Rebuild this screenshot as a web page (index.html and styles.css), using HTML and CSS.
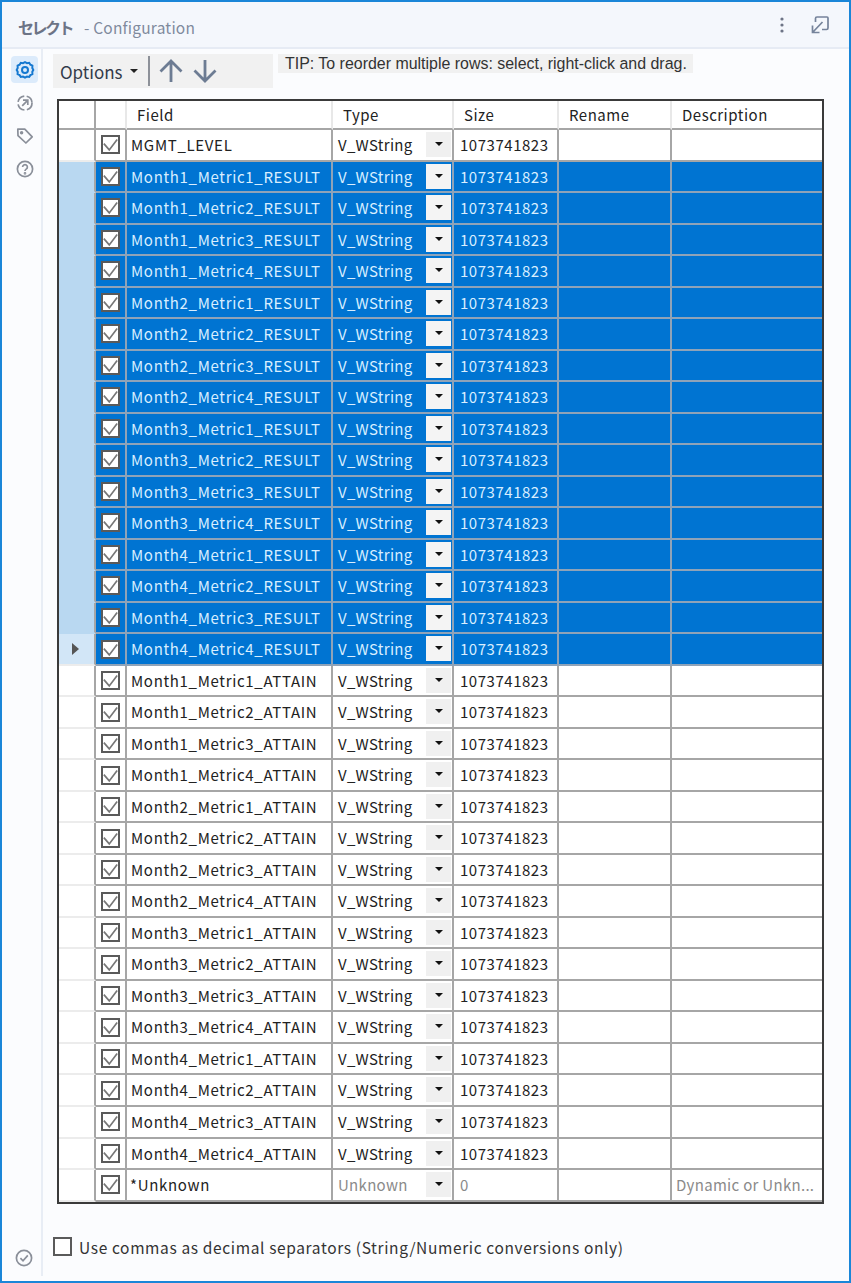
FILE: index.html
```html
<!DOCTYPE html>
<html lang="en">
<head>
<meta charset="utf-8">
<title>Configuration</title>
<link rel="stylesheet" href="styles.css">
</head>
<body>
<svg class="defs" width="0" height="0"><symbol id="chk" viewBox="0 0 18 18"><path d="M1 8l6.500 7.500L17 3"/></symbol></svg>
<div class="window">
  <header class="titlebar">
    <div class="title"><span class="tool">セレクト</span><span class="sub">- Configuration</span></div>
    <div class="title-actions">
      <svg class="ic-dots" width="6" height="18" viewBox="0 0 6 18"><circle cx="3" cy="3" r="1.6"/><circle cx="3" cy="9" r="1.6"/><circle cx="3" cy="15" r="1.6"/></svg>
      <svg class="ic-pop" width="18" height="18" viewBox="0 0 18 18" fill="none"><path d="M4.500 6V2.500Q4.500 1 6 1h10q1 0 1 1v10q0 1.500-1.500 1.500H11"/><path d="M11.500 6L2 16M1.500 9.500V16.500H8.500"/></svg>
    </div>
  </header>
  <div class="body">
    <nav class="rail">
      <div class="rail-top">
        <div class="rail-btn active"><svg width="20" height="20" viewBox="0 0 20 20" fill="none" stroke="#1578d0" stroke-width="2"><path d="M10 2.200l2 1 2.200-.4 1.200 1.900 2 1-.1 2.300 1 1.900-1 1.900.1 2.300-2 1-1.200 1.900-2.200-.4-2 1-2-1-2.200.4-1.200-1.900-2-1 .1-2.300-1-1.900 1-1.900-.1-2.300 2-1 1.200-1.900 2.200.4z"/><circle cx="10" cy="10" r="3"/></svg></div>
        <div class="rail-btn"><svg width="20" height="20" viewBox="0 0 20 20" fill="none" stroke="#8a8f99" stroke-width="1.700"><circle cx="10" cy="10" r="7" stroke-dasharray="9 2.500"/><path d="M7.200 12.800L12.600 7.400M8 7.200h4.800V12"/></svg></div>
        <div class="rail-btn"><svg width="20" height="20" viewBox="0 0 20 20" fill="none" stroke="#8a8f99" stroke-width="1.700"><path d="M2.800 3.200h7l7.400 7.600-6.300 6.200-7.900-7.400z" stroke-linejoin="round"/><circle cx="6.600" cy="6.800" r=".9"/></svg></div>
        <div class="rail-btn"><svg width="20" height="20" viewBox="0 0 20 20" fill="none" stroke="#8a8f99" stroke-width="1.700"><circle cx="10" cy="10" r="7.600"/><path d="M7.600 8a2.400 2.400 0 1 1 3.600 2.100c-.8.5-1.200 1-1.200 1.900"/><circle cx="10" cy="14.300" r=".5"/></svg></div>
      </div>
      <div class="rail-btn end"><svg width="20" height="20" viewBox="0 0 20 20" fill="none" stroke="#8a8f99" stroke-width="1.700"><circle cx="10" cy="10" r="7.600"/><path d="M6.400 10.200l2.600 2.600 4.800-5.400"/></svg></div>
    </nav>
    <main class="content">
      <div class="toolbar-row">
        <div class="toolbar">
          <span class="options">Options</span><span class="caret"></span>
          <span class="sep"></span>
          <svg class="up" width="26" height="26" viewBox="0 0 26 26" fill="none" stroke="#6d7c93" stroke-width="2.800"><path d="M13 24V3M2.500 13.500L13 3l10.500 10.500"/></svg>
          <svg class="down" width="26" height="26" viewBox="0 0 26 26" fill="none" stroke="#6d7c93" stroke-width="2.800"><path d="M13 2v21M2.500 12.500L13 23l10.500-10.500"/></svg>
        </div>
        <div class="tip">TIP: To reorder multiple rows: select, right-click and drag.</div>
      </div>
      <div class="grid">
        <div class="row head"><div class="rh"></div><div class="ck"></div><div class="c">Field</div><div class="c">Type</div><div class="c">Size</div><div class="c">Rename</div><div class="c">Description</div></div>
        <div class="row"><div class="rh"></div><div class="ck"><span class="box"><svg><use href="#chk"/></svg></span></div><div class="c">MGMT_LEVEL</div><div class="c ty">V_WString<span class="dd"></span></div><div class="c">1073741823</div><div class="c"></div><div class="c"></div></div>
        <div class="row sel"><div class="rh"></div><div class="ck"><span class="box"><svg><use href="#chk"/></svg></span></div><div class="c">Month1_Metric1_RESULT</div><div class="c ty">V_WString<span class="dd"></span></div><div class="c">1073741823</div><div class="c"></div><div class="c"></div></div>
        <div class="row sel"><div class="rh"></div><div class="ck"><span class="box"><svg><use href="#chk"/></svg></span></div><div class="c">Month1_Metric2_RESULT</div><div class="c ty">V_WString<span class="dd"></span></div><div class="c">1073741823</div><div class="c"></div><div class="c"></div></div>
        <div class="row sel"><div class="rh"></div><div class="ck"><span class="box"><svg><use href="#chk"/></svg></span></div><div class="c">Month1_Metric3_RESULT</div><div class="c ty">V_WString<span class="dd"></span></div><div class="c">1073741823</div><div class="c"></div><div class="c"></div></div>
        <div class="row sel"><div class="rh"></div><div class="ck"><span class="box"><svg><use href="#chk"/></svg></span></div><div class="c">Month1_Metric4_RESULT</div><div class="c ty">V_WString<span class="dd"></span></div><div class="c">1073741823</div><div class="c"></div><div class="c"></div></div>
        <div class="row sel"><div class="rh"></div><div class="ck"><span class="box"><svg><use href="#chk"/></svg></span></div><div class="c">Month2_Metric1_RESULT</div><div class="c ty">V_WString<span class="dd"></span></div><div class="c">1073741823</div><div class="c"></div><div class="c"></div></div>
        <div class="row sel"><div class="rh"></div><div class="ck"><span class="box"><svg><use href="#chk"/></svg></span></div><div class="c">Month2_Metric2_RESULT</div><div class="c ty">V_WString<span class="dd"></span></div><div class="c">1073741823</div><div class="c"></div><div class="c"></div></div>
        <div class="row sel"><div class="rh"></div><div class="ck"><span class="box"><svg><use href="#chk"/></svg></span></div><div class="c">Month2_Metric3_RESULT</div><div class="c ty">V_WString<span class="dd"></span></div><div class="c">1073741823</div><div class="c"></div><div class="c"></div></div>
        <div class="row sel"><div class="rh"></div><div class="ck"><span class="box"><svg><use href="#chk"/></svg></span></div><div class="c">Month2_Metric4_RESULT</div><div class="c ty">V_WString<span class="dd"></span></div><div class="c">1073741823</div><div class="c"></div><div class="c"></div></div>
        <div class="row sel"><div class="rh"></div><div class="ck"><span class="box"><svg><use href="#chk"/></svg></span></div><div class="c">Month3_Metric1_RESULT</div><div class="c ty">V_WString<span class="dd"></span></div><div class="c">1073741823</div><div class="c"></div><div class="c"></div></div>
        <div class="row sel"><div class="rh"></div><div class="ck"><span class="box"><svg><use href="#chk"/></svg></span></div><div class="c">Month3_Metric2_RESULT</div><div class="c ty">V_WString<span class="dd"></span></div><div class="c">1073741823</div><div class="c"></div><div class="c"></div></div>
        <div class="row sel"><div class="rh"></div><div class="ck"><span class="box"><svg><use href="#chk"/></svg></span></div><div class="c">Month3_Metric3_RESULT</div><div class="c ty">V_WString<span class="dd"></span></div><div class="c">1073741823</div><div class="c"></div><div class="c"></div></div>
        <div class="row sel"><div class="rh"></div><div class="ck"><span class="box"><svg><use href="#chk"/></svg></span></div><div class="c">Month3_Metric4_RESULT</div><div class="c ty">V_WString<span class="dd"></span></div><div class="c">1073741823</div><div class="c"></div><div class="c"></div></div>
        <div class="row sel"><div class="rh"></div><div class="ck"><span class="box"><svg><use href="#chk"/></svg></span></div><div class="c">Month4_Metric1_RESULT</div><div class="c ty">V_WString<span class="dd"></span></div><div class="c">1073741823</div><div class="c"></div><div class="c"></div></div>
        <div class="row sel"><div class="rh"></div><div class="ck"><span class="box"><svg><use href="#chk"/></svg></span></div><div class="c">Month4_Metric2_RESULT</div><div class="c ty">V_WString<span class="dd"></span></div><div class="c">1073741823</div><div class="c"></div><div class="c"></div></div>
        <div class="row sel"><div class="rh"></div><div class="ck"><span class="box"><svg><use href="#chk"/></svg></span></div><div class="c">Month4_Metric3_RESULT</div><div class="c ty">V_WString<span class="dd"></span></div><div class="c">1073741823</div><div class="c"></div><div class="c"></div></div>
        <div class="row sel cur"><div class="rh"><span class="tri"></span></div><div class="ck"><span class="box"><svg><use href="#chk"/></svg></span></div><div class="c">Month4_Metric4_RESULT</div><div class="c ty">V_WString<span class="dd"></span></div><div class="c">1073741823</div><div class="c"></div><div class="c"></div></div>
        <div class="row"><div class="rh"></div><div class="ck"><span class="box"><svg><use href="#chk"/></svg></span></div><div class="c">Month1_Metric1_ATTAIN</div><div class="c ty">V_WString<span class="dd"></span></div><div class="c">1073741823</div><div class="c"></div><div class="c"></div></div>
        <div class="row"><div class="rh"></div><div class="ck"><span class="box"><svg><use href="#chk"/></svg></span></div><div class="c">Month1_Metric2_ATTAIN</div><div class="c ty">V_WString<span class="dd"></span></div><div class="c">1073741823</div><div class="c"></div><div class="c"></div></div>
        <div class="row"><div class="rh"></div><div class="ck"><span class="box"><svg><use href="#chk"/></svg></span></div><div class="c">Month1_Metric3_ATTAIN</div><div class="c ty">V_WString<span class="dd"></span></div><div class="c">1073741823</div><div class="c"></div><div class="c"></div></div>
        <div class="row"><div class="rh"></div><div class="ck"><span class="box"><svg><use href="#chk"/></svg></span></div><div class="c">Month1_Metric4_ATTAIN</div><div class="c ty">V_WString<span class="dd"></span></div><div class="c">1073741823</div><div class="c"></div><div class="c"></div></div>
        <div class="row"><div class="rh"></div><div class="ck"><span class="box"><svg><use href="#chk"/></svg></span></div><div class="c">Month2_Metric1_ATTAIN</div><div class="c ty">V_WString<span class="dd"></span></div><div class="c">1073741823</div><div class="c"></div><div class="c"></div></div>
        <div class="row"><div class="rh"></div><div class="ck"><span class="box"><svg><use href="#chk"/></svg></span></div><div class="c">Month2_Metric2_ATTAIN</div><div class="c ty">V_WString<span class="dd"></span></div><div class="c">1073741823</div><div class="c"></div><div class="c"></div></div>
        <div class="row"><div class="rh"></div><div class="ck"><span class="box"><svg><use href="#chk"/></svg></span></div><div class="c">Month2_Metric3_ATTAIN</div><div class="c ty">V_WString<span class="dd"></span></div><div class="c">1073741823</div><div class="c"></div><div class="c"></div></div>
        <div class="row"><div class="rh"></div><div class="ck"><span class="box"><svg><use href="#chk"/></svg></span></div><div class="c">Month2_Metric4_ATTAIN</div><div class="c ty">V_WString<span class="dd"></span></div><div class="c">1073741823</div><div class="c"></div><div class="c"></div></div>
        <div class="row"><div class="rh"></div><div class="ck"><span class="box"><svg><use href="#chk"/></svg></span></div><div class="c">Month3_Metric1_ATTAIN</div><div class="c ty">V_WString<span class="dd"></span></div><div class="c">1073741823</div><div class="c"></div><div class="c"></div></div>
        <div class="row"><div class="rh"></div><div class="ck"><span class="box"><svg><use href="#chk"/></svg></span></div><div class="c">Month3_Metric2_ATTAIN</div><div class="c ty">V_WString<span class="dd"></span></div><div class="c">1073741823</div><div class="c"></div><div class="c"></div></div>
        <div class="row"><div class="rh"></div><div class="ck"><span class="box"><svg><use href="#chk"/></svg></span></div><div class="c">Month3_Metric3_ATTAIN</div><div class="c ty">V_WString<span class="dd"></span></div><div class="c">1073741823</div><div class="c"></div><div class="c"></div></div>
        <div class="row"><div class="rh"></div><div class="ck"><span class="box"><svg><use href="#chk"/></svg></span></div><div class="c">Month3_Metric4_ATTAIN</div><div class="c ty">V_WString<span class="dd"></span></div><div class="c">1073741823</div><div class="c"></div><div class="c"></div></div>
        <div class="row"><div class="rh"></div><div class="ck"><span class="box"><svg><use href="#chk"/></svg></span></div><div class="c">Month4_Metric1_ATTAIN</div><div class="c ty">V_WString<span class="dd"></span></div><div class="c">1073741823</div><div class="c"></div><div class="c"></div></div>
        <div class="row"><div class="rh"></div><div class="ck"><span class="box"><svg><use href="#chk"/></svg></span></div><div class="c">Month4_Metric2_ATTAIN</div><div class="c ty">V_WString<span class="dd"></span></div><div class="c">1073741823</div><div class="c"></div><div class="c"></div></div>
        <div class="row"><div class="rh"></div><div class="ck"><span class="box"><svg><use href="#chk"/></svg></span></div><div class="c">Month4_Metric3_ATTAIN</div><div class="c ty">V_WString<span class="dd"></span></div><div class="c">1073741823</div><div class="c"></div><div class="c"></div></div>
        <div class="row"><div class="rh"></div><div class="ck"><span class="box"><svg><use href="#chk"/></svg></span></div><div class="c">Month4_Metric4_ATTAIN</div><div class="c ty">V_WString<span class="dd"></span></div><div class="c">1073741823</div><div class="c"></div><div class="c"></div></div>
        <div class="row last"><div class="rh"></div><div class="ck"><span class="box"><svg><use href="#chk"/></svg></span></div><div class="c unk">*Unknown</div><div class="c ty dim">Unknown<span class="dd"></span></div><div class="c dim">0</div><div class="c"></div><div class="c dim desc">Dynamic or Unkn...</div></div>
      </div>
      <label class="commas"><span class="box plain"></span><span>Use commas as decimal separators (String/Numeric conversions only)</span></label>
    </main>
  </div>
</div>
</body>
</html>
```
FILE: styles.css
```css
* { box-sizing: border-box; }
html, body { margin: 0; height: 100%; }
body { font-family: "Noto Sans CJK JP", "Noto Sans", sans-serif; color: #222; overflow: hidden; }
.defs { position: absolute; }
.window { width: 851px; height: 1283px; border: 2px solid #1a86d8; background: #fbfcfe; display: flex; flex-direction: column; }
.titlebar { height: 47px; flex: none; background: #f4f7fc; border-bottom: 2px solid #e6ebf4; display: flex; align-items: center; justify-content: space-between; padding: 5px 20px 0 16px; }
.title { display: flex; align-items: baseline; gap: 12px; }
.tool { font-size: 16px; font-weight: 700; color: #6c7486; letter-spacing: -2.500px; }
.sub { font-size: 15.500px; color: #7f8a9d; letter-spacing: .2px; }
.title-actions { display: flex; align-items: center; gap: 26px; margin-top: -4px; }
.ic-dots { fill: #6d7486; }
.ic-pop { stroke: #75839a; stroke-width: 1.700; }
.body { flex: 1; display: flex; min-height: 0; }
.rail { width: 41px; flex: none; border-right: 2px solid #e8edf5; margin-bottom: 5px; padding: 7px 0 5px 9px; display: flex; flex-direction: column; justify-content: space-between; }
.rail-top { display: flex; flex-direction: column; gap: 6px; }
.rail-btn { width: 27px; height: 27px; display: flex; align-items: center; justify-content: center; border-radius: 4px; }
.rail-btn.active { background: #dcebfb; }
.rail-btn.end { margin-left: -1px; }
.content { flex: 1; padding: 5px 0 0 10px; }
.toolbar-row { display: flex; align-items: flex-start; gap: 5px; height: 45px; }
.toolbar { width: 220px; height: 34px; background: #f1f1f1; display: flex; align-items: center; padding-left: 7px; gap: 9px; }
.options { font-size: 17px; color: #333b4a; }
.caret { width: 0; height: 0; border: 4px solid transparent; border-top: 4px solid #222; border-bottom: 0; margin-left: -2px; }
.sep { width: 2px; height: 30px; background: #8d9199; margin-left: 1px; }
.toolbar .up { margin-left: -1px; }
.toolbar .down { margin-left: -1px; }
.tip { height: 19px; background: #f1f1f1; padding: 0 6px 0 7px; font: 15.950px/20px "Liberation Sans", sans-serif; color: #333; white-space: nowrap; }
.grid { width: 767px; margin-left: 4px; border: 2px solid #3a3a3a; background: #fff; }
.row { display: grid; grid-template-columns: 37px 31px 206px 121px 105px 113px 1fr; height: 31.520px; font-size: 15px; line-height: 29px; }
.row.head { height: 29px; line-height: 28px; }
.rh { border-right: 2px solid #a6a6a6; border-bottom: 2px solid #ececec; display: flex; align-items: center; justify-content: flex-end; padding-right: 15px; }
.ck { border-right: 2px solid #a6a6a6; border-bottom: 2px solid #a6a6a6; display: flex; align-items: center; justify-content: center; }
.c { border-right: 2px solid #a6a6a6; border-bottom: 2px solid #a6a6a6; padding: 0 4px; white-space: nowrap; overflow: hidden; position: relative; letter-spacing: .680px; }
.row .c:last-child { border-right: 0; }
.row .c:nth-child(4) { padding-left: 5px; letter-spacing: .300px; }
.row .c:nth-child(5) { padding-left: 6px; letter-spacing: .530px; }
.row.head .c { padding-left: 10px; border-right-color: #e8e8e8; letter-spacing: .500px; }
.head .rh { border-right-color: #a6a6a6; border-bottom-color: #a6a6a6; }
.head .ck { border-right-color: #e8e8e8; }
.sel .rh { background: #b9d8f1; border-bottom-color: #b9d8f1; }
.cur .rh { background: #d2e6f7; border-bottom-color: #ececec; }
.sel .c, .sel .ck { background: #0074d2; color: #d8eeff; border-color: #8fa3b8; }
.box { width: 19px; height: 19px; border: 2px solid #5a5a5a; background: #fff; display: block; }
.box svg { display: block; width: 15px; height: 15px; fill: none; stroke: #777; stroke-width: 2; }
.box.plain { flex: none; }
.dd { position: absolute; right: 1px; top: 2px; width: 25px; height: 25px; background: #f0f0f0; }
.dd::after { content: ""; position: absolute; left: 9px; top: 10px; border: 4px solid transparent; border-top: 4px solid #111; border-bottom: 0; }
.sel .dd { background: #f4f4f4; }
.dim { color: #8a8a8a; }
.unk { text-indent: -1px; }
.row .desc { letter-spacing: .300px; }
.tri { border: 6px solid transparent; border-left: 7px solid #555; border-right: 0; }
.commas { display: flex; align-items: center; gap: 7px; margin-top: 32px; font-size: 15.500px; color: #333; letter-spacing: .630px; }
```
